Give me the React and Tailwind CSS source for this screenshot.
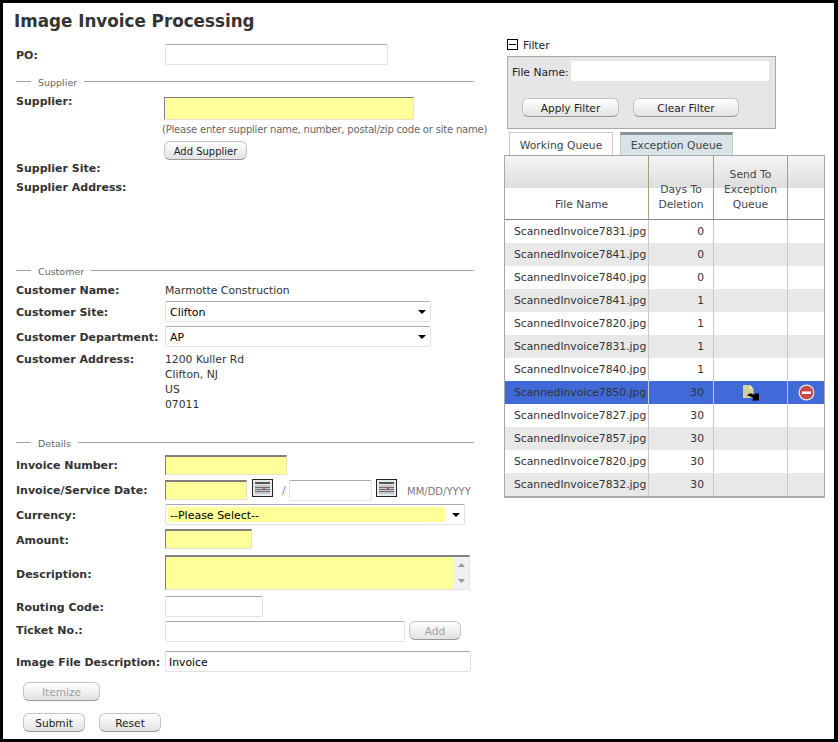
import React from 'react';

const rows = [
  ['ScannedInvoice7831.jpg', 0],
  ['ScannedInvoice7841.jpg', 0],
  ['ScannedInvoice7840.jpg', 0],
  ['ScannedInvoice7841.jpg', 1],
  ['ScannedInvoice7820.jpg', 1],
  ['ScannedInvoice7831.jpg', 1],
  ['ScannedInvoice7840.jpg', 1],
  ['ScannedInvoice7850.jpg', 30],
  ['ScannedInvoice7827.jpg', 30],
  ['ScannedInvoice7857.jpg', 30],
  ['ScannedInvoice7820.jpg', 30],
  ['ScannedInvoice7832.jpg', 30],
];

const Label = ({ children, className = '' }) => (
  <div className={`w-[149px] shrink-0 pt-[3px] font-bold text-[#333] leading-[14px] whitespace-nowrap ${className}`}>{children}</div>
);

const inputCls = 'bg-white border border-[#dde1e8] border-t-[#a9a9a9] rounded-[2px] h-[21px]';
const reqCls = 'bg-[#ffff99] border border-[#e4e4c8] border-t-[#808080] border-l-[#808080] border-t-2 h-[20px]';

const Button = ({ children, className = '', disabled }) => (
  <div
    className={`h-[19px] pt-[2px] flex items-center justify-center rounded-[6px] border border-[#c4c4c4] border-b-[#999] bg-gradient-to-b from-white to-[#e2e2e2] text-[10.6px] ${disabled ? 'text-[#a0a0a0]' : 'text-[#222]'} ${className}`}
  >
    {children}
  </div>
);

const Legend = ({ children, className = '' }) => (
  <div className={`flex items-start h-[13px] w-[458px] text-[9.5px] text-[#666] ${className}`}>
    <div className="w-[15px] h-px mt-[5px] bg-[#a0a0a0]" />
    <span className="px-[7px] leading-[13px]">{children}</span>
    <div className="flex-1 h-px mt-[5px] bg-[#a0a0a0]" />
  </div>
);

const Arrow = () => (
  <svg width="8" height="4" viewBox="0 0 8 4" className="shrink-0">
    <path d="M0 0h8L4 4z" fill="#000" />
  </svg>
);

const Calendar = () => (
  <svg width="21" height="18" viewBox="0 0 21 18" className="shrink-0">
    <rect x="0.5" y="0.5" width="20" height="17" fill="#e8e8e8" stroke="#222" />
    <rect x="3" y="3" width="15" height="2" fill="#555" />
    <rect x="3" y="6" width="15" height="9" fill="#c8c8d0" />
    <path d="M3 8.5h15M3 10.5h15M3 12.5h15" stroke="#6a6a78" />
    <rect x="11" y="8" width="2" height="2" fill="#d84040" />
  </svg>
);

const MoveIcon = () => (
  <svg width="16" height="16" viewBox="0 0 16 16">
    <path d="M0 0h7l3.500 4v9H0z" fill="#d6d09a" />
    <path d="M7 0l3.500 4H7z" fill="#f4f0d0" />
    <path d="M4 10.500C6 8 9 8 10.500 10l1.500-1.500 4 0V15.500H9L10.500 13.500C9 12 7 11 4 10.500z" fill="#000" />
  </svg>
);

const StopIcon = () => (
  <svg width="17" height="17" viewBox="0 0 17 17">
    <circle cx="8.500" cy="8.500" r="8" fill="#e8e8e8" />
    <circle cx="8.500" cy="8.500" r="6.800" fill="#c8484c" />
    <rect x="4" y="7.500" width="9" height="2.500" fill="#fff" />
  </svg>
);

const LeftColumn = () => (
  <div className="w-[501px] shrink-0 pl-[13px]">
    <h1 className="-ml-[2px] h-[35px] pt-[2px] flex items-center text-[16.75px] font-bold text-[#333] leading-none">
      Image Invoice Processing
    </h1>

    <div className="flex items-center mt-[6px] h-[21px]">
      <Label>PO:</Label>
      <div className={`${inputCls} w-[223px]`} />
    </div>

    <Legend className="mt-[11px]">Supplier</Legend>

    <div className="flex mt-[3px]">
      <Label>Supplier:</Label>
      <div className="-ml-px pt-[5px]">
        <div className="bg-[#ffff99] border border-[#e4e4c8] border-t-[#808080] border-l-[#808080] h-[23px] w-[250px]" />
        <div className="-ml-[2px] mt-[3px] leading-[14px] text-[10px] tracking-[-0.2px] text-[#666] whitespace-nowrap">
          (Please enter supplier name, number, postal/zip code or site name)
        </div>
        <Button className="w-[83px] mt-[4px] text-[10px]">Add Supplier</Button>
      </div>
    </div>

    <div className="-mt-px"><Label>Supplier Site:</Label></div>
    <div className="mt-[2px]"><Label>Supplier Address:</Label></div>

    <Legend className="mt-[70px]">Customer</Legend>

    <div className="flex mt-[3px] h-[16px]">
      <Label>Customer Name:</Label>
      <span className="pt-[3px] leading-[14px] text-[10.8px] text-[#333]">Marmotte Construction</span>
    </div>
    <div className="flex items-center mt-[4px] h-[21px]">
      <Label>Customer Site:</Label>
      <div className={`${inputCls} w-[266px] flex items-center justify-between px-[4px]`}>
        <span className="pt-[3px]">Clifton</span><Arrow />
      </div>
    </div>
    <div className="flex items-center mt-[4px] h-[21px]">
      <Label>Customer Department:</Label>
      <div className={`${inputCls} w-[266px] flex items-center justify-between px-[4px]`}>
        <span className="pt-[3px]">AP</span><Arrow />
      </div>
    </div>
    <div className="flex mt-[3px]">
      <Label>Customer Address:</Label>
      <div className="pt-[2px] leading-[15px] text-[10.8px] text-[#333]">
        <div>1200 Kuller Rd</div>
        <div>Clifton, NJ</div>
        <div>US</div>
        <div>07011</div>
      </div>
    </div>

    <Legend className="mt-[25px]">Details</Legend>

    <div className="flex items-center mt-[5px] h-[20px]">
      <Label className="-mt-[2px]">Invoice Number:</Label>
      <div className={`${reqCls} w-[122px]`} />
    </div>
    <div className="flex items-center mt-[5px] h-[20px]">
      <Label className="-mt-[2px]">Invoice/Service Date:</Label>
      <div className={`${reqCls} w-[82px]`} />
      <div className="ml-[5px] -mt-[4px]"><Calendar /></div>
      <span className="ml-[9px] w-[7px] pt-[2px] text-[#888]">/</span>
      <div className={`${inputCls} w-[83px]`} />
      <div className="ml-[4px] -mt-[4px]"><Calendar /></div>
      <span className="ml-[10px] pt-[2px] text-[10px] text-[#777] whitespace-nowrap">MM/DD/YYYY</span>
    </div>
    <div className="flex items-center mt-[4px] h-[21px]">
      <Label>Currency:</Label>
      <div className={`${inputCls} w-[300px] flex items-center justify-between pl-[2px] pr-[4px]`}>
        <span className="bg-[#ffff99] w-[277px] h-[15px] leading-[18px] pl-[2px]">--Please Select--</span>
        <Arrow />
      </div>
    </div>
    <div className="flex items-center mt-[4px] h-[20px]">
      <Label>Amount:</Label>
      <div className={`${reqCls} w-[87px]`} />
    </div>
    <div className="flex items-center mt-[6px] h-[35px]">
      <Label className="mt-[2px]">Description:</Label>
      <div className="w-[305px] h-[35px] flex border border-[#dde1e8] border-t-2 border-t-[#808080] border-l-[#808080]">
        <div className="flex-1 bg-[#ffff99]" />
        <div className="w-[16px] bg-[#f0f0f0] flex flex-col items-center justify-between py-[6px]">
          <svg width="7" height="4" viewBox="0 0 7 4"><path d="M0 4L3.500 0 7 4z" fill="#999" /></svg>
          <svg width="7" height="4" viewBox="0 0 7 4"><path d="M0 0L3.500 4 7 0z" fill="#999" /></svg>
        </div>
      </div>
    </div>
    <div className="flex items-center mt-[6px] h-[21px]">
      <Label>Routing Code:</Label>
      <div className={`${inputCls} w-[98px]`} />
    </div>
    <div className="flex items-center mt-[4px] h-[21px]">
      <Label className="-mt-[5px]">Ticket No.:</Label>
      <div className={`${inputCls} w-[240px]`} />
      <Button disabled className="ml-[4px] w-[52px] -mt-[2px]">Add</Button>
    </div>
    <div className="flex items-center mt-[9px] h-[21px]">
      <Label>Image File Description:</Label>
      <div className={`${inputCls} w-[306px] flex items-center pl-[3px]`}>
        <span className="pt-[3px] text-[10.8px]">Invoice</span>
      </div>
    </div>
    <div className="flex ml-[7px] mt-[10px]">
      <Button disabled className="w-[77px]">Itemize</Button>
    </div>
    <div className="flex ml-[7px] mt-[12px] gap-[14px]">
      <Button className="w-[62px]">Submit</Button>
      <Button className="w-[62px]">Reset</Button>
    </div>
  </div>
);

const RightColumn = () => (
  <div className="flex-1 pt-[35px] text-[10.75px]">
    <div className="ml-[3px] flex items-center h-[12px] gap-[5px] text-[#222]">
      <div className="w-[11px] h-[11px] border border-black flex items-center justify-center">
        <div className="w-[7px] h-px bg-black" />
      </div>
      <span className="pt-[4px]">Filter</span>
    </div>
    <div className="ml-[3px] mt-[6px] w-[269px] h-[73px] bg-[#e6e6e6] border border-[#a8a8a8] px-[4px] pt-[4px]">
      <div className="flex items-center h-[20px]">
        <span className="w-[59px] pt-[4px] text-[#222] whitespace-nowrap">File Name:</span>
        <div className="w-[198px] h-[20px] bg-white rounded-[2px]" />
      </div>
      <div className="flex mt-[17px] ml-[10px] gap-[14px]">
        <Button className="w-[97px]">Apply Filter</Button>
        <Button className="w-[106px]">Clear Filter</Button>
      </div>
    </div>
    <div className="flex ml-[5px] mt-[3px] gap-[7px]">
      <div className="w-[104px] h-[23px] pt-[5px] flex items-center justify-center border border-b-0 border-[#c8c8c8] bg-white text-[#444]">
        Working Queue
      </div>
      <div className="w-[113px] h-[23px] pt-[3px] flex items-center justify-center border-t-[3px] border-t-[#8a9296] border-x border-x-[#c4ccd0] bg-[#d8e4e8] text-[#444]">
        Exception Queue
      </div>
    </div>
    <div className="w-[321px] border border-[#a8a8a8] border-b-2">
      <div className="flex h-[64px] text-[#444] text-center leading-[15px] border-b border-b-[#888] bg-[linear-gradient(#f4f4f4,#dedede_32px,#fff_32px)]">
        <div className="w-[144px] flex items-end justify-center pb-[7px] pl-[10px] border-r border-r-[#a8a070]">File Name</div>
        <div className="w-[65px] flex items-end justify-center pb-[7px] border-r border-r-[#a8a070]">Days To<br />Deletion</div>
        <div className="w-[74px] flex items-end justify-center pb-[7px] border-r border-r-[#a8a070]">Send To<br />Exception<br />Queue</div>
        <div className="flex-1" />
      </div>
      {rows.map(([name, days], i) => {
        const selected = i === 7;
        const bg = selected ? 'bg-[#4169d8]' : i % 2 ? 'bg-[#e8e8e8]' : 'bg-white';
        return (
          <div key={i} className={`flex h-[23px] items-center text-[#333] ${bg}`}>
            <div className="w-[144px] h-full pt-[2px] flex items-center pl-[9px] border-r border-r-[#c8c8c8]">{name}</div>
            <div className="w-[65px] h-full pt-[2px] flex items-center justify-end pr-[9px] border-r border-r-[#c8c8c8]">{days}</div>
            <div className="w-[74px] h-full flex items-center justify-center border-r border-r-[#c8c8c8]">
              {selected && <MoveIcon />}
            </div>
            <div className="flex-1 h-full flex items-center justify-center">{selected && <StopIcon />}</div>
          </div>
        );
      })}
    </div>
  </div>
);

export default function App() {
  return (
    <div className="w-[838px] h-[742px] box-border border-[3px] border-black border-r-[4px] bg-white flex overflow-hidden font-['DejaVu_Sans',sans-serif] text-[11px]">
      <LeftColumn />
      <RightColumn />
    </div>
  );
}
